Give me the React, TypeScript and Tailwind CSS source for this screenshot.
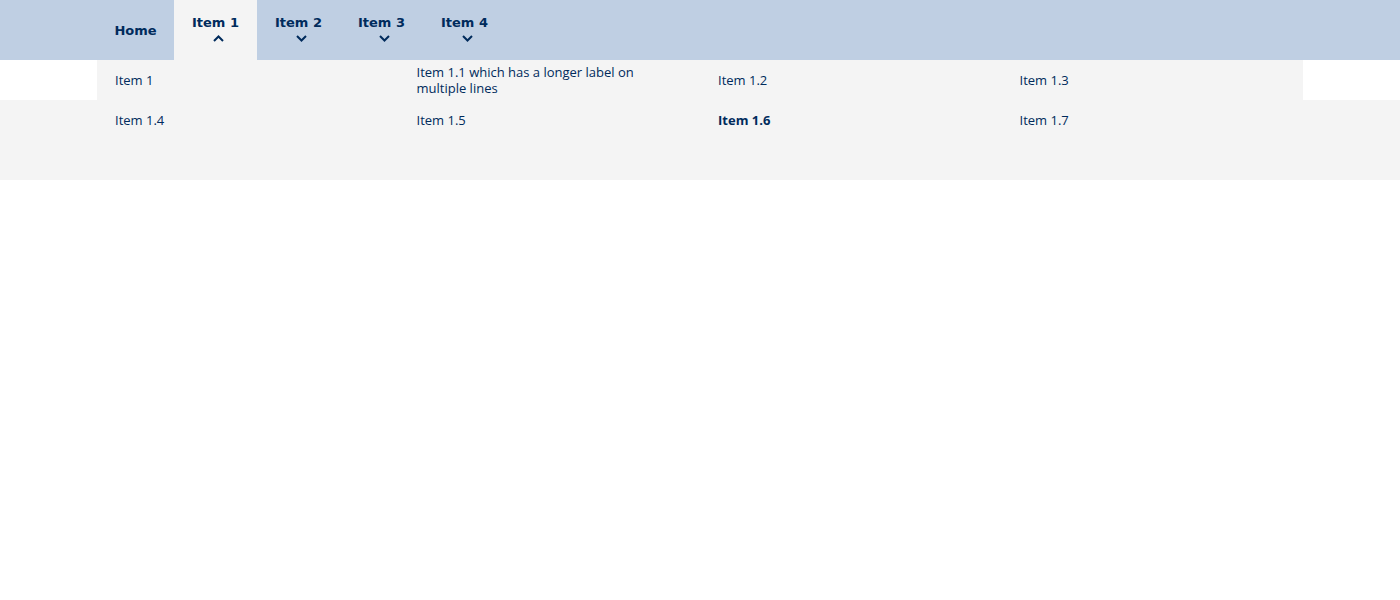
const navItems = ["Item 1", "Item 2", "Item 3", "Item 4"];

const rowOne = ["Item 1", "Item 1.1 which has a longer label on multiple lines", "Item 1.2", "Item 1.3"];
const rowTwo = ["Item 1.4", "Item 1.5", "Item 1.6", "Item 1.7"];

function Chevron({ up }: { up?: boolean }) {
  return (
    <svg width="11" height="7" viewBox="0 0 11 7" className="mt-1 ml-[5px]">
      <path
        d={up ? "M1 6 L5.5 1.5 L10 6" : "M1 1 L5.5 5.5 L10 1"}
        fill="none"
        stroke="#002b5c"
        strokeWidth="2"
      />
    </svg>
  );
}

export default function App() {
  return (
    <div className="min-h-screen bg-white text-[#002b5c] font-['Open_Sans',sans-serif]">
      {/* Top bar */}
      <nav className="bg-[#bfcfe3]">
        <div className="w-[1206px] mx-auto flex h-[60px] font-['DejaVu_Sans',sans-serif] font-bold text-[13px]">
          <a className="w-[77px] flex items-center justify-center pt-px">Home</a>
          {navItems.map((label, i) => (
            <a
              key={label}
              className={
                "w-[83px] flex flex-col items-center pt-[15px] " +
                (i === 0 ? "bg-[#f4f4f4]" : "")
              }
            >
              <span className="leading-4">{label}</span>
              <Chevron up={i === 0} />
            </a>
          ))}
        </div>
      </nav>

      {/* Dropdown */}
      <div className="w-[1206px] mx-auto bg-[#f4f4f4] grid grid-cols-4 h-10 text-[13px] leading-4">
        {rowOne.map((label) => (
          <div key={label} className="px-[18px] flex items-center">
            {label}
          </div>
        ))}
      </div>
      <div className="bg-[#f4f4f4] pb-10">
        <div className="w-[1206px] mx-auto grid grid-cols-4 h-10 text-[13px] leading-4">
          {rowTwo.map((label) => (
            <div
              key={label}
              className={"px-[18px] flex items-center " + (label === "Item 1.6" ? "font-bold" : "")}
            >
              {label}
            </div>
          ))}
        </div>
      </div>
    </div>
  );
}
